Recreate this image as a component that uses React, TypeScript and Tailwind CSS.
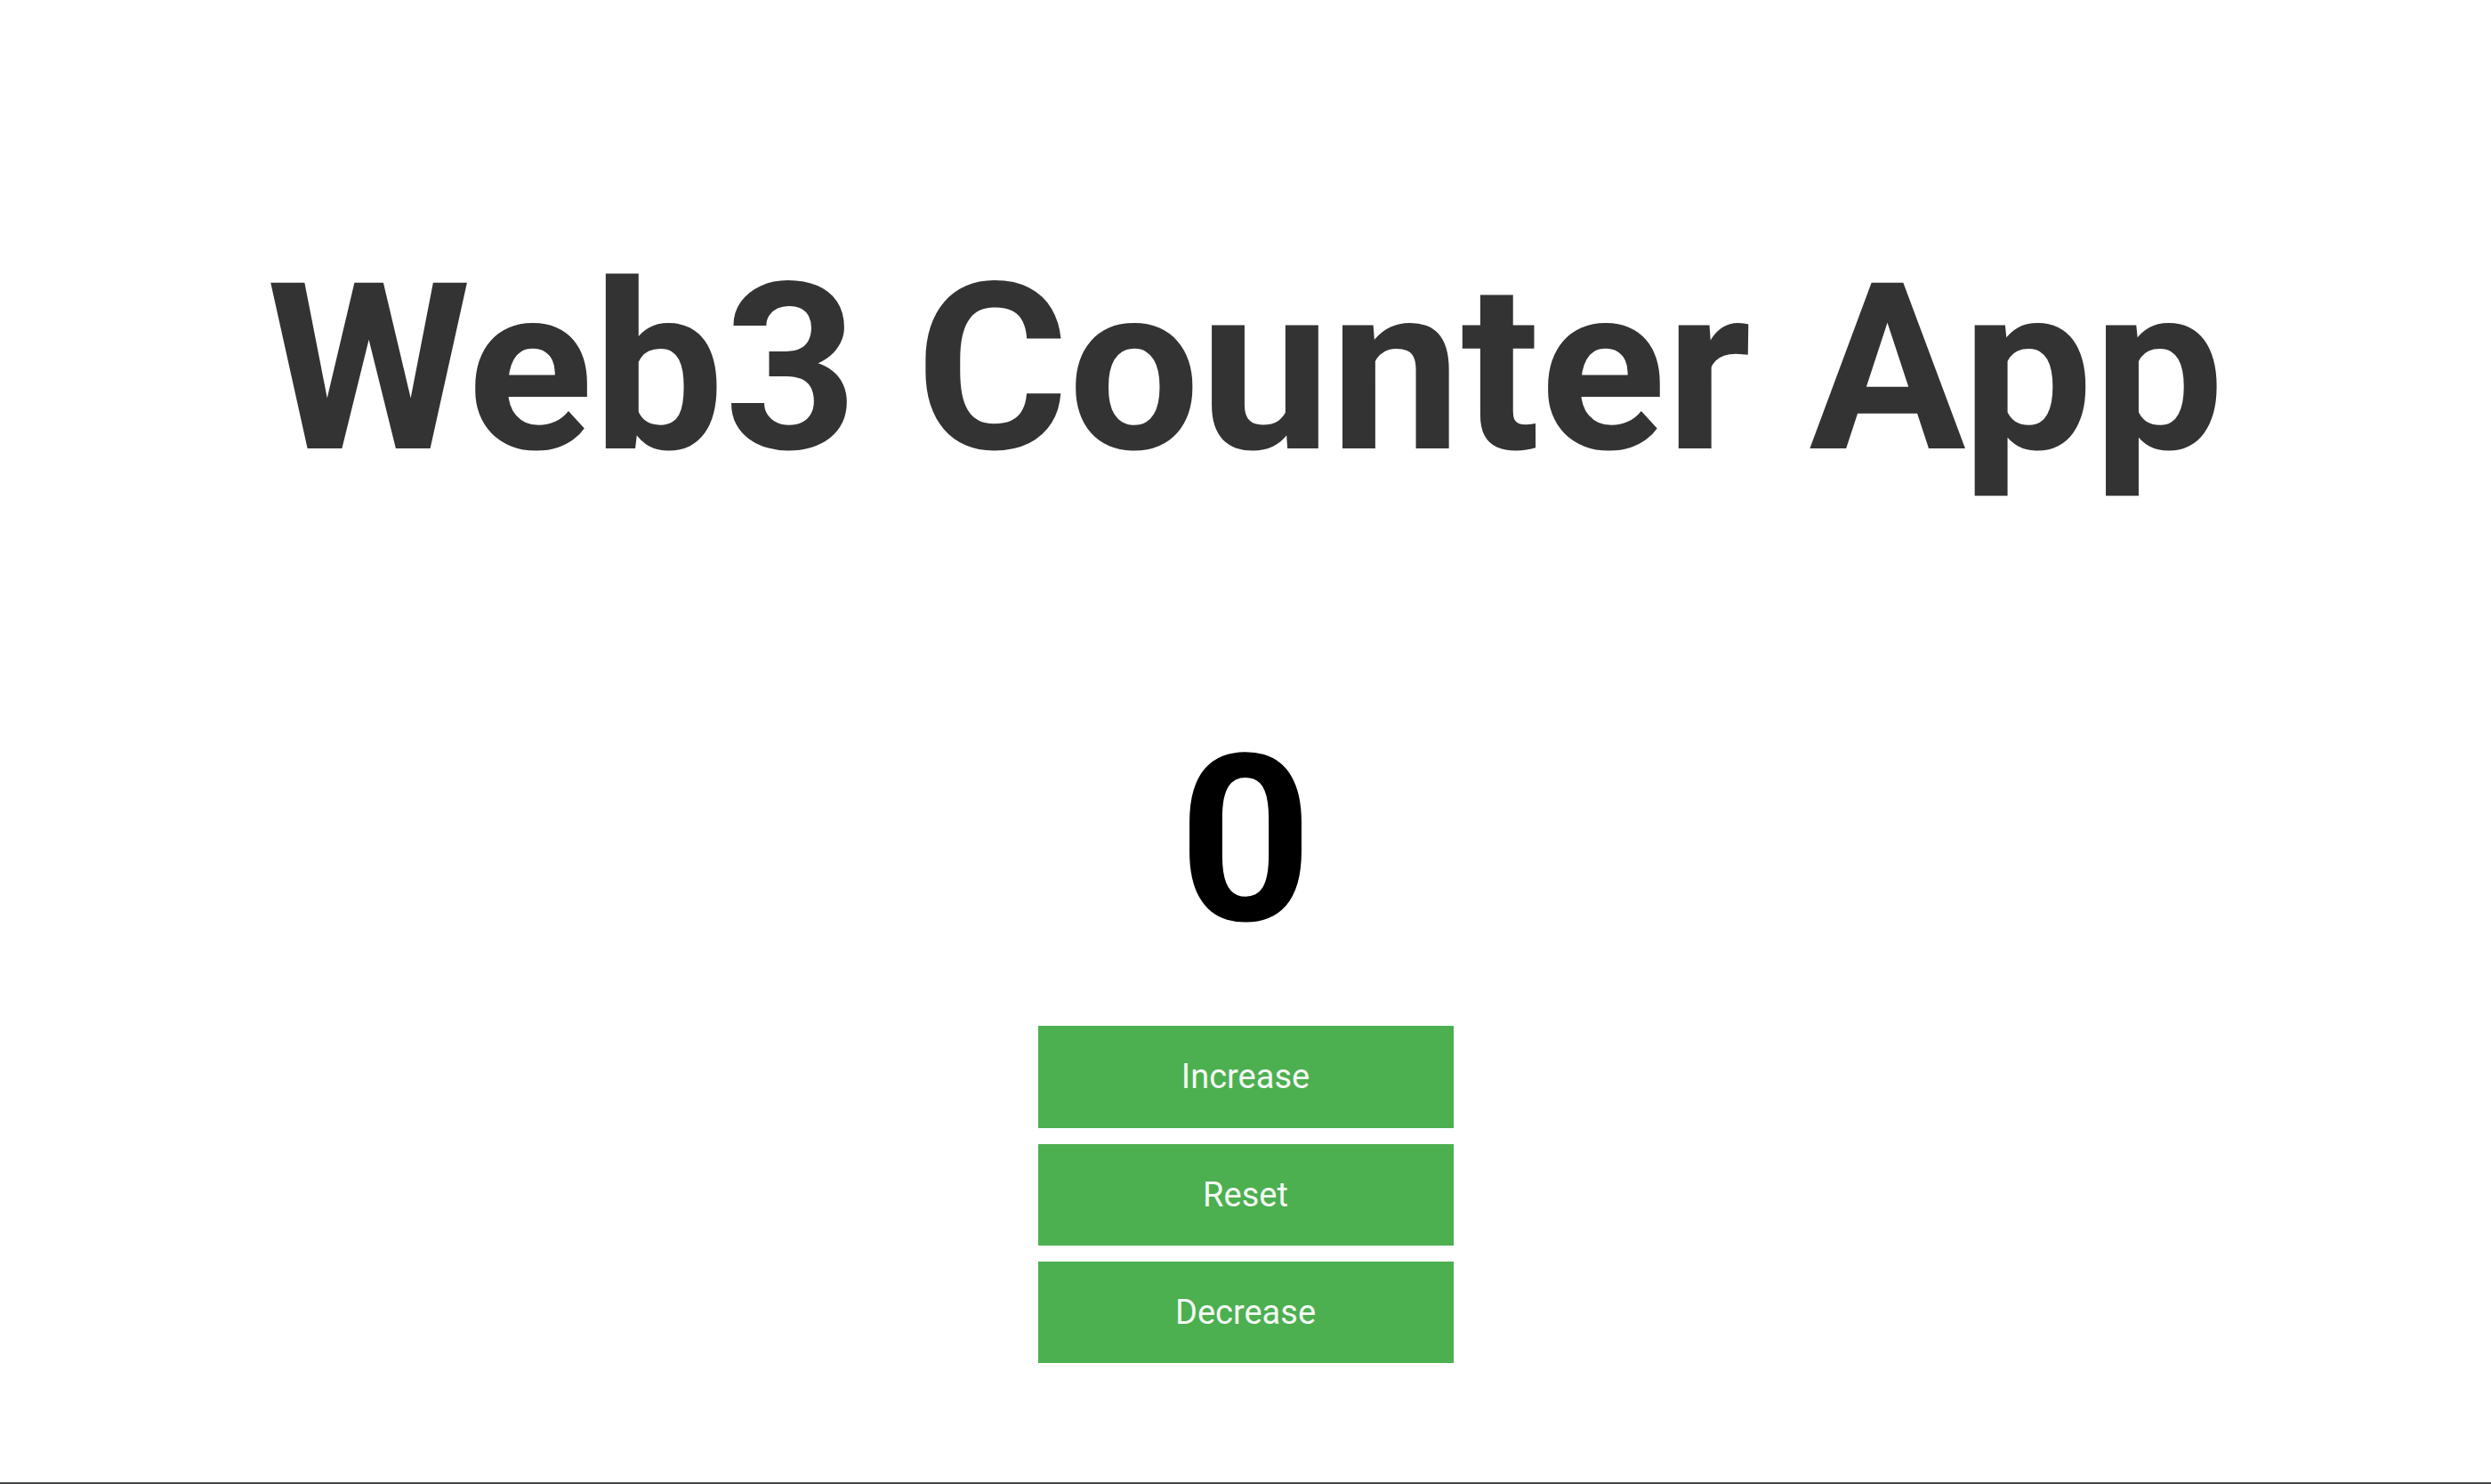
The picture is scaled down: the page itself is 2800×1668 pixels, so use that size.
import React, { useState } from "react";

export default function App() {
  const [count, setCount] = useState(0);
  return (
    <div className="flex h-[1668px] flex-col bg-white" style={{ fontFamily: "Roboto, 'Liberation Sans', sans-serif" }}>
      <div className="flex flex-1 flex-col items-center">
        <h1 className="mt-[261px] text-[262px] font-bold leading-[normal] text-[#333333]">Web3 Counter App</h1>
        <div className="mt-[223px] text-[262px] font-bold leading-[normal] text-black">{count}</div>
        <div className="mt-[55px] flex flex-col gap-[18px]">
          <button onClick={() => setCount(count + 1)} className="h-[115px] w-[467px] bg-[#4caf50] text-[38px] text-[#f4f8f4]">Increase</button>
          <button onClick={() => setCount(0)} className="h-[114px] w-[467px] bg-[#4caf50] text-[38px] text-[#f4f8f4]">Reset</button>
          <button onClick={() => setCount(count - 1)} className="h-[114px] w-[467px] bg-[#4caf50] text-[38px] text-[#f4f8f4]">Decrease</button>
        </div>
      </div>
      <div className="h-[2px] bg-[#45474b]" />
    </div>
  );
}
